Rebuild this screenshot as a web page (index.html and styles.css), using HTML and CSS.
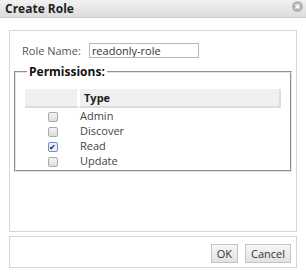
FILE: index.html
```html
<!DOCTYPE html>
<html lang="en">
<head>
    <meta charset="UTF-8">
    <title>Create Role</title>
    <link rel="stylesheet" href="styles.css">
</head>
<body>
    <div class="dialog">
        <div class="titlebar">
            <span class="title">Create Role</span>
            <span class="close">
                <svg width="11" height="11" viewBox="0 0 11 11">
                    <circle cx="5.5" cy="5.5" r="5.5" fill="#b4b4b4"/>
                    <path d="M3.5 3.5 L7.5 7.5 M7.5 3.5 L3.5 7.5" stroke="#fff" stroke-width="1.6"/>
                </svg>
            </span>
        </div>
        <div class="content">
            <div class="name-row">
                <label for="roleName">Role Name:</label>
                <input type="text" id="roleName" value="readonly-role">
            </div>
            <fieldset class="permissions">
                <legend>Permissions:</legend>
                <table class="perm-table">
                    <thead>
                        <tr>
                            <th class="check-col"></th>
                            <th class="type-col">Type</th>
                        </tr>
                    </thead>
                    <tbody>
                        <tr><td class="check-col"><span class="box"></span></td><td>Admin</td></tr>
                        <tr><td class="check-col"><span class="box"></span></td><td>Discover</td></tr>
                        <tr><td class="check-col"><span class="box checked">&#10004;</span></td><td>Read</td></tr>
                        <tr><td class="check-col"><span class="box"></span></td><td>Update</td></tr>
                    </tbody>
                </table>
            </fieldset>
        </div>
        <div class="footer">
            <button class="btn">OK</button>
            <button class="btn">Cancel</button>
        </div>
    </div>
</body>
</html>
```

FILE: styles.css
```css
body {
    margin: 0;
    font-family: "Open Sans", sans-serif;
    font-size: 11px;
    color: #333;
    background: #fff;
}
.dialog {
    width: 306px;
    height: 278px;
    background: #fff;
}
.titlebar {
    height: 17px;
    display: flex;
    align-items: center;
    justify-content: space-between;
    padding: 0 3px 0 5px;
    background: linear-gradient(#f2f2f2, #dcdcdc);
    border-bottom: 1px solid #d0d0d0;
}
.title {
    font-weight: bold;
    font-size: 12px;
    color: #222;
}
.close {
    display: flex;
    margin-top: -4px;
}
.content {
    margin: 12px 9px 0;
    height: 200px;
    border: 1px solid #d6d6d6;
    padding: 0 4px;
}
.name-row {
    display: flex;
    align-items: center;
    gap: 8px;
    margin: 12px 0 0 8px;
}
.name-row label {
    color: #555;
}
.name-row input {
    width: 104px;
    height: 13px;
    padding: 0 2px;
    border: 1px solid #b8b8b8;
    font-family: inherit;
    font-size: 11px;
    color: #333;
}
.permissions {
    margin: 5px 0 0;
    height: 96px;
    padding: 9px 9px 0;
    border: 2px groove #e4e4e4;
}
.permissions legend {
    font-weight: bold;
    font-size: 12px;
    color: #111;
    padding: 0 2px;
    margin-left: 2px;
}
.perm-table {
    width: 256px;
    border-collapse: separate;
    border-spacing: 0;
}
.perm-table th {
    height: 17px;
    padding: 0;
    background: #f0f0f0;
    border-bottom: 2px solid #dcdcdc;
    text-align: left;
    font-weight: bold;
    color: #222;
}
.perm-table th.check-col {
    width: 52px;
    border-right: 3px solid #fff;
}
.perm-table th.type-col {
    padding-left: 4px;
    border-right: 2px solid #dcdcdc;
}
.perm-table td {
    height: 15px;
    padding: 0;
    color: #444;
}
.perm-table td.check-col {
    text-align: center;
}
.box {
    display: inline-block;
    width: 8px;
    height: 8px;
    border: 1px solid #a8a8a8;
    border-radius: 2px;
    background: linear-gradient(#f4f4f4, #dedede);
    vertical-align: middle;
    font-size: 8px;
    line-height: 8px;
    text-align: center;
    color: #222;
}
.box.checked {
    border-color: #6a8fd8;
    background: #e8eefa;
}
.footer {
    margin: 4px 9px 0;
    height: 30px;
    border: 1px solid #d6d6d6;
    display: flex;
    align-items: center;
    justify-content: flex-end;
    gap: 7px;
    padding-right: 5px;
}
.btn {
    height: 19px;
    padding: 0 5px;
    font-family: inherit;
    font-size: 11px;
    color: #333;
    background: linear-gradient(#f6f6f6, #e2e2e2);
    border: 1px solid #c4c4c4;
    margin-top: 3px;
}
```
